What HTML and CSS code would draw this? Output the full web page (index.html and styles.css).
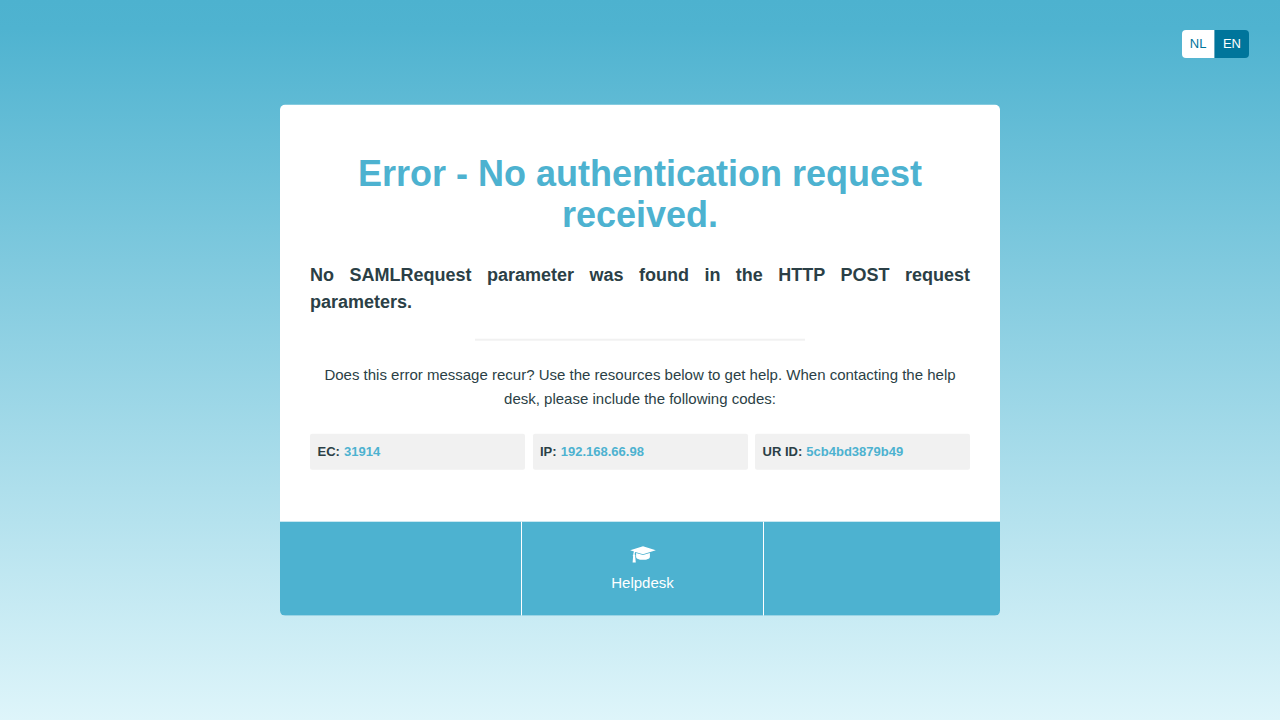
FILE: index.html
```html
<!DOCTYPE html>
<html lang="en">
<head>
<meta charset="utf-8">
<title>Error - No authentication request received.</title>
<link rel="stylesheet" href="styles.css">
</head>
<body>
<nav class="languages"><a class="language">NL</a><a class="language active">EN</a></nav>
<main class="card">
  <section class="content">
    <h1 class="title">Error - No authentication request received.</h1>
    <p class="message">No SAMLRequest parameter was found in the HTTP POST request parameters.</p>
    <hr class="divider">
    <p class="help">Does this error message recur? Use the resources below to get help. When contacting the help desk, please include the following codes:</p>
    <div class="codes">
      <div class="code">EC: <span class="value">31914</span></div>
      <div class="code">IP: <span class="value">192.168.66.98</span></div>
      <div class="code">UR ID: <span class="value">5cb4bd3879b49</span></div>
    </div>
  </section>
  <footer class="footer">
    <div class="cell"></div>
    <a class="cell">
      <svg class="icon" width="26" height="18" viewBox="0 0 26 18" fill="#fff"><path d="M13 .5 25.8 4.5 13 8.6 5.3 6.3C4.8 6.9 4.7 7.8 4.7 8.8Q5.7 9.5 5.2 10.8L5.8 16.7H2.6L3.1 10.8Q2.3 9.6 3.3 8.8C3.3 7.6 3.5 6.5 4 5.7L.2 4.5Z"/><path d="M6.1 7.2 13 9.2 19.9 7.2V11.2C19.9 12.9 16.7 14.1 13 14.1S6.1 12.9 6.1 11.2Z"/></svg>
      <span>Helpdesk</span>
    </a>
    <div class="cell"></div>
  </footer>
</main>
</body>
</html>
```
FILE: styles.css
```css
* { box-sizing: border-box; }
body {
  position: relative;
  display: flex;
  align-items: flex-start;
  justify-content: center;
  height: 100vh;
  margin: 0;
  overflow: hidden;
  font-family: "Liberation Sans", Arial, sans-serif;
  font-size: 15px;
  line-height: 24px;
  color: #2b3f46;
  background: linear-gradient(#4db2cf 0%, #4fb3d0 4%, #def5fa 100%);
}
.languages {
  position: absolute;
  top: 30px;
  right: 31px;
  display: flex;
  border-radius: 4px;
  overflow: hidden;
  font-size: 13px;
  line-height: 28px;
}
.language { padding: 0 8px 0 7.5px; background: #fff; color: #00759b; }
.active { padding: 0 8px; border-left: 1px solid #66a9c0; background: #00759b; color: #fff; margin-left: -.5px; }
.card {
  width: 720px;
  height: 511px;
  margin-top: 104px;
  display: flex;
  flex-direction: column;
  border-radius: 5px;
  overflow: hidden;
  background: #fff;
  transform: translateY(.7px);
}
.content { flex: 1; padding: 48px 30px 0; }
.title {
  margin: 0;
  font-size: 36px;
  line-height: 41px;
  text-align: center;
  color: #4db2d0;
}
.message {
  margin: 27px 0 23px;
  font-size: 18px;
  font-weight: bold;
  line-height: 27px;
  text-align: justify;
}
.divider { width: 330px; height: 2px; margin: 0 auto; border: 0; background: #f1f1f1; }
.help { margin: 22px 0 23px; text-align: center; }
.codes { display: grid; grid-template-columns: repeat(3, 1fr); gap: 7.5px; }
.code {
  height: 36px;
  padding: 0 7.5px;
  border-radius: 2px;
  background: #f1f1f1;
  font-size: 13px;
  font-weight: bold;
  line-height: 36px;
}
.value { margin-left: .5px; color: #4db2d0; }
.footer {
  display: grid;
  grid-template-columns: 242px 242px 236px;
  height: 94px;
  background: #4db2d0;
}
.cell {
  display: flex;
  flex-direction: column;
  align-items: center;
  padding-top: 24px;
  color: #fff;
}
.cell:not(:last-child) { border-right: 1px solid #fff; }
.icon { margin-bottom: 7px; }
```
